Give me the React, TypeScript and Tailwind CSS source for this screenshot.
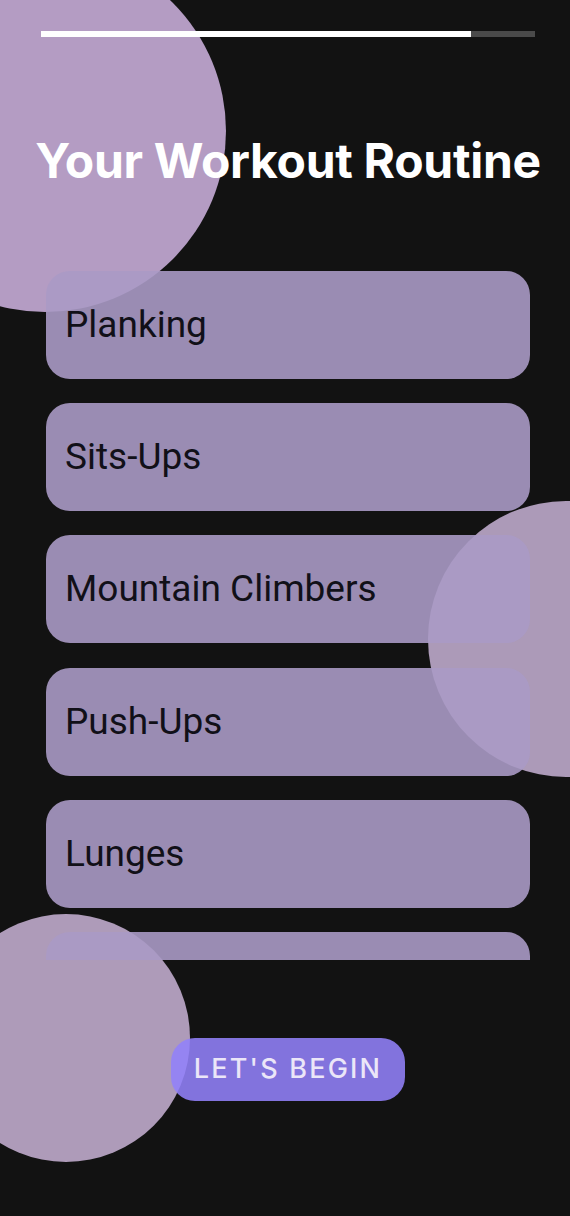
import React from "react";

const items = ["Planking", "Sits-Ups", "Mountain Climbers", "Push-Ups", "Lunges", ""];

export default function App() {
  return (
    <div className="relative w-[570px] h-[1216px] overflow-hidden bg-[#121212]">
      {/* decorative circles */}
      <div className="absolute left-[-136px] top-[-50px] w-[362px] h-[362px] rounded-full bg-[#b49cc3]" />
      <div className="absolute left-[428px] top-[501px] w-[276px] h-[276px] rounded-full bg-[#ac9ab8]" />
      <div className="absolute left-[-58px] top-[914px] w-[248px] h-[248px] rounded-full bg-[#ae9bb9]" />

      <div className="relative flex flex-col items-center pl-[6px]">
        {/* progress */}
        <div className="mt-[31px] w-[494px] h-[6px] bg-[#4a4a4a] flex">
          <div className="w-[430px] h-full bg-white" />
        </div>

        <h1
          className="mt-[95px] text-white text-[48px] leading-[58px] font-bold tracking-[-0.3px] whitespace-nowrap"
          style={{ fontFamily: "Inter, 'Open Sans', sans-serif" }}
        >
          Your Workout Routine
        </h1>

        <div className="mt-[81px] w-[484px] h-[689px] overflow-hidden flex flex-col gap-[24.2px]">
          {items.map((t, i) => (
            <div
              key={i}
              className="shrink-0 h-[108px] rounded-[24px] bg-[#aa9ac5]/90 flex items-center pl-[19px]"
            >
              {t && (
                <span
                  className="text-[37px] leading-[44px] text-[#111018]"
                  style={{ fontFamily: "Roboto, 'Liberation Sans', sans-serif" }}
                >
                  {t}
                </span>
              )}
            </div>
          ))}
        </div>

        <button
          className="mt-[78px] w-[234px] h-[63px] rounded-[24px] bg-[#9281f9]/[0.88] text-[#ebe6f8] text-[27px] font-medium tracking-[2.2px] flex items-center justify-center"
          style={{ fontFamily: "Inter, 'Open Sans', sans-serif" }}
        >
          LET'S BEGIN
        </button>
      </div>
    </div>
  );
}
